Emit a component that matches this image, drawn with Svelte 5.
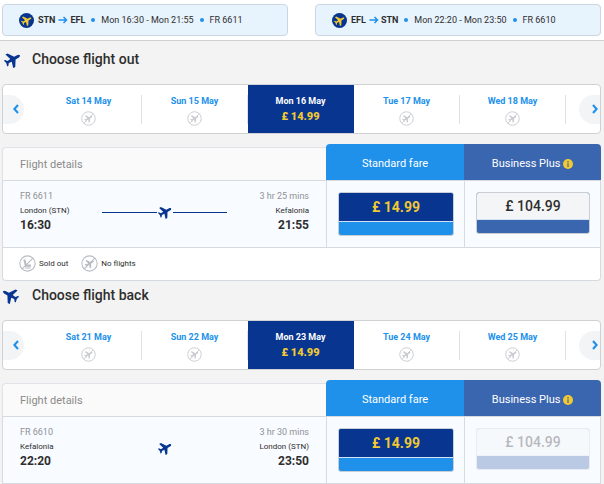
<script>
	const plane =
		'M12 0c1.3 0 2.1 1.8 2.1 3.4v4.8L23 13.8v3.4l-8.9-2.8-.4 4.6 3 2.4v1.9L12 22.2l-4.7 1.1v-1.9l3-2.4-.4-4.6L1 17.2v-3.4l8.9-5.6V3.4C9.9 1.8 10.7 0 12 0z';

	const summary = [
		{ from: 'STN', to: 'EFL', times: 'Mon 16:30 - Mon 21:55', number: 'FR 6611' },
		{ from: 'EFL', to: 'STN', times: 'Mon 22:20 - Mon 23:50', number: 'FR 6610' }
	];

	const flights = [
		{
			title: 'Choose flight out',
			back: false,
			days: ['Sat 14 May', 'Sun 15 May', 'Mon 16 May', 'Tue 17 May', 'Wed 18 May'],
			number: 'FR 6611',
			duration: '3 hr 25 mins',
			from: 'London (STN)',
			to: 'Kefalonia',
			departs: '16:30',
			arrives: '21:55',
			legend: true
		},
		{
			title: 'Choose flight back',
			back: true,
			days: ['Sat 21 May', 'Sun 22 May', 'Mon 23 May', 'Tue 24 May', 'Wed 25 May'],
			number: 'FR 6610',
			duration: '3 hr 30 mins',
			from: 'Kefalonia',
			to: 'London (STN)',
			departs: '22:20',
			arrives: '23:50',
			legend: false
		}
	];

	let selected = $state([2, 2]);

	function move(i, step) {
		selected[i] = Math.min(4, Math.max(0, selected[i] + step));
	}
</script>

{#snippet planeIcon(size)}
	<svg class="plane" width={size} height={size} viewBox="0 0 24 24" aria-hidden="true">
		<path d={plane} transform="rotate(60 12 12)" />
	</svg>
{/snippet}

{#snippet noFlights(size)}
	<svg class="crossed" width={size} height={size} viewBox="0 0 24 24" aria-hidden="true">
		<circle cx="12" cy="12" r="10.8" />
		<path class="fill" d={plane} transform="translate(5 5) scale(.58) rotate(60 12 12)" />
		<path d="M4.4 19.6L19.6 4.4" />
	</svg>
{/snippet}

{#snippet soldOut(size)}
	<svg class="crossed" width={size} height={size} viewBox="0 0 24 24" aria-hidden="true">
		<circle cx="12" cy="12" r="10.8" />
		<path class="fill" d="M6 6.5h3l1.8 7H17v3H8.6z" />
		<path d="M8.5 18.4h8M4.4 19.6L19.6 4.4" />
	</svg>
{/snippet}

<header>
	{#each summary as trip}
		<div class="trip">
			<span class="badge">{@render planeIcon(11)}</span>
			<b>{trip.from}</b>
			<svg class="arrow" width="10" height="8" viewBox="0 0 10 8" aria-hidden="true">
				<path d="M0.5 4h8M5.5 1l3 3-3 3" />
			</svg>
			<b>{trip.to}</b>
			<i class="dot"></i>
			<span>{trip.times}</span>
			<i class="dot"></i>
			<span>{trip.number}</span>
		</div>
	{/each}
</header>

<main>
	{#each flights as flight, i}
		<section>
			<h2 class:back={flight.back}>{@render planeIcon(17)}{flight.title}</h2>

			<div class="carousel">
				<button class="step prev" aria-label="Previous day" onclick={() => move(i, -1)}>
					<svg width="6" height="10" viewBox="0 0 6 10"><path d="M5 1L1.4 5 5 9" /></svg>
				</button>
				<ul>
					{#each flight.days as day, d}
						<li class:selected={selected[i] === d}>
							<button class="day" onclick={() => (selected[i] = d)}>
								<span>{day}</span>
								{#if d === 2}
									<strong>£ 14.99</strong>
								{:else}
									{@render noFlights(15)}
								{/if}
							</button>
						</li>
					{/each}
				</ul>
				<button class="step next" aria-label="Next day" onclick={() => move(i, 1)}>
					<svg width="6" height="10" viewBox="0 0 6 10"><path d="M1 1l3.6 4L1 9" /></svg>
				</button>
			</div>

			<table>
				<thead>
					<tr>
						<th class="details"><div>Flight details</div></th>
						<th class="standard">Standard fare</th>
						<th class="business">
							Business Plus
							<svg class="info" width="10" height="10" viewBox="0 0 10 10" aria-hidden="true">
								<circle cx="5" cy="5" r="5" />
								<path d="M5 2v1.4M5 4.3v3.6" />
							</svg>
						</th>
					</tr>
				</thead>
				<tbody>
					<tr>
						<td>
							<div class="route">
								<div class="stop">
									<span class="muted">{flight.number}</span>
									<span class="airport">{flight.from}</span>
									<time>{flight.departs}</time>
								</div>
								<div class="track" class:plain={flight.back}>{@render planeIcon(14)}</div>
								<div class="stop end">
									<span class="muted">{flight.duration}</span>
									<span class="airport">{flight.to}</span>
									<time>{flight.arrives}</time>
								</div>
							</div>
						</td>
						<td class="fare">
							<button class="price chosen"><span>£ 14.99</span></button>
						</td>
						<td class="fare">
							<button class="price plus" disabled={flight.back}><span>£ 104.99</span></button>
						</td>
					</tr>
				</tbody>
			</table>

			{#if flight.legend}
				<div class="legend">
					<span>{@render soldOut(17)}Sold out</span>
					<span>{@render noFlights(17)}No flights</span>
				</div>
			{/if}
		</section>
	{/each}
</main>

<style>
	:global(body) {
		background: #f3f3f3;
		font-family: Roboto, 'Liberation Sans', sans-serif;
		color: #2e2e2e;
	}
	button {
		font-family: inherit;
		padding: 0;
		border: 0;
		background: none;
		cursor: pointer;
	}
	svg {
		display: block;
		flex: none;
	}
	.plane {
		fill: #073590;
	}

	header {
		display: flex;
		gap: 27px;
		padding: 4px 3px 4px 2px;
		background: #fff;
		border-bottom: 1px solid #cfcfcf;
	}
	.trip {
		flex: 1;
		display: flex;
		align-items: center;
		box-sizing: border-box;
		height: 32px;
		padding-left: 16px;
		border: 1px solid #ccd6e2;
		border-radius: 4px;
		background: #e7f3fd;
		font-size: 9px;
		white-space: nowrap;
	}
	.trip b {
		font-weight: 700;
	}
	.badge {
		display: flex;
		align-items: center;
		justify-content: center;
		width: 15px;
		height: 15px;
		margin-right: 4px;
		border-radius: 50%;
		background: #073590;
	}
	.badge .plane {
		fill: #f1c933;
	}
	.arrow {
		margin: 0 2px 0 3px;
		fill: none;
		stroke: #2091eb;
		stroke-width: 1.5;
	}
	.dot {
		width: 4px;
		height: 4px;
		margin: 0 6px;
		border-radius: 50%;
		background: #2091eb;
	}

	main {
		padding: 4px 3px 0 2px;
	}
	h2 {
		display: flex;
		align-items: flex-start;
		gap: 11px;
		height: 33px;
		margin: 0;
		padding: 6px 0 0 2px;
		font-size: 14px;
		line-height: 16px;
		font-weight: 500;
	}
	h2.back {
		gap: 13px;
		padding-left: 0;
	}
	h2.back .plane {
		transform: scaleX(-1);
	}

	.carousel {
		display: flex;
		align-items: center;
		box-sizing: border-box;
		height: 50px;
		border: 1px solid #cfd1d4;
		border-radius: 4px;
		background: #fff;
	}
	.step {
		display: flex;
		align-items: center;
		width: 21px;
		height: 29px;
		background: #f3f4f6;
	}
	.step svg {
		fill: none;
		stroke: #2091eb;
		stroke-width: 2.1;
	}
	.prev {
		padding-left: 10px;
		margin-right: 12px;
		border-radius: 0 15px 15px 0;
	}
	.next {
		padding-left: 13px;
		margin-left: 13px;
		border-radius: 15px 0 0 15px;
	}
	ul {
		flex: 1;
		display: flex;
		height: 100%;
		margin: 0;
		padding: 0;
		list-style: none;
	}
	li {
		flex: 1;
		display: flex;
		align-items: center;
	}
	.day {
		flex: 1;
		display: flex;
		flex-direction: column;
		align-items: center;
		gap: 3px;
		height: 29px;
		border-right: 1px solid #dfe1e4;
		color: #2091eb;
		font-size: 9px;
		line-height: 13px;
		font-weight: 700;
	}
	.selected {
		background: #073590;
	}
	.selected .day {
		gap: 1px;
		border-color: transparent;
		color: #fff;
	}
	.day strong {
		color: #f1c933;
		font-size: 11px;
		line-height: 15px;
	}
	.crossed {
		fill: none;
		stroke: #b9bcc2;
		stroke-width: 1.5;
	}
	.crossed .fill {
		fill: #b9bcc2;
		stroke: none;
	}
	.day .crossed {
		opacity: 0.75;
	}

	table {
		width: 100%;
		margin-top: 10px;
		border-spacing: 0;
		table-layout: fixed;
	}
	th,
	td {
		padding: 0;
	}
	th {
		height: 33px;
		padding-top: 3px;
		color: #fff;
		font-size: 11px;
		line-height: 14px;
		font-weight: 400;
		white-space: nowrap;
	}
	.details div {
		box-sizing: border-box;
		height: 33px;
		padding: 10px 17px 0;
		border: 1px solid #dfe2e6;
		border-width: 1px 0 0 1px;
		border-radius: 4px 0 0 0;
		background: #fafafa;
		color: #8b8b8b;
		text-align: left;
	}
	.standard {
		width: 138px;
		border-radius: 4px 0 0 0;
		background: #2091eb;
	}
	.business {
		width: 137px;
		border-radius: 0 4px 0 0;
		background: #3a66af;
	}
	.info {
		display: inline-block;
		vertical-align: -2px;
		fill: #f1c933;
	}
	.info path {
		stroke: #3a66af;
		stroke-width: 1.2;
	}
	td {
		height: 66px;
		border: 1px solid #d6dbe2;
		border-right-width: 0;
		background: #f8fbff;
		vertical-align: top;
	}
	td:last-child {
		border-right-width: 1px;
	}
	.route {
		display: flex;
		padding: 8px 17px 0;
	}
	.stop {
		display: flex;
		flex-direction: column;
		width: 82px;
		white-space: nowrap;
	}
	.end {
		align-items: flex-end;
	}
	.muted {
		color: #8f9194;
		font-size: 9px;
		line-height: 15px;
	}
	.airport {
		font-size: 8px;
		line-height: 14px;
	}
	time {
		font-size: 12px;
		line-height: 15px;
		font-weight: 700;
	}
	.track {
		flex: 1;
		display: flex;
		align-items: center;
		gap: 1px;
		height: 46px;
	}
	.track::before,
	.track::after {
		content: '';
		flex: 1;
		height: 1px;
		background: #073590;
	}
	.plain::before,
	.plain::after {
		background: none;
	}
	.fare {
		padding: 11px 10px 0 11px;
		height: 55px;
	}
	.price {
		display: flex;
		flex-direction: column;
		box-sizing: border-box;
		width: 100%;
		height: 44px;
		overflow: hidden;
		border: 1px solid #c9ced4;
		border-radius: 3px;
		background: #2091eb;
		color: #f1c933;
		font-size: 14px;
		font-weight: 700;
	}
	.price span {
		width: 100%;
		line-height: 28px;
		border-bottom: 1px solid #d3e3f5;
		background: #073590;
	}
	.plus {
		height: 42px;
		background: #3a66af;
		color: #2e2e2e;
		font-weight: 500;
	}
	.plus span {
		line-height: 26px;
		background: #f4f5f7;
	}
	.plus:disabled {
		opacity: 0.32;
		cursor: default;
	}

	.legend {
		display: flex;
		gap: 13px;
		box-sizing: border-box;
		height: 33px;
		padding: 0 16px 2px;
		border: 1px solid #d6dbe2;
		border-top: 0;
		border-radius: 0 0 4px 4px;
		background: #fff;
		font-size: 8px;
	}
	.legend span {
		display: flex;
		align-items: center;
		gap: 3px;
	}
</style>
